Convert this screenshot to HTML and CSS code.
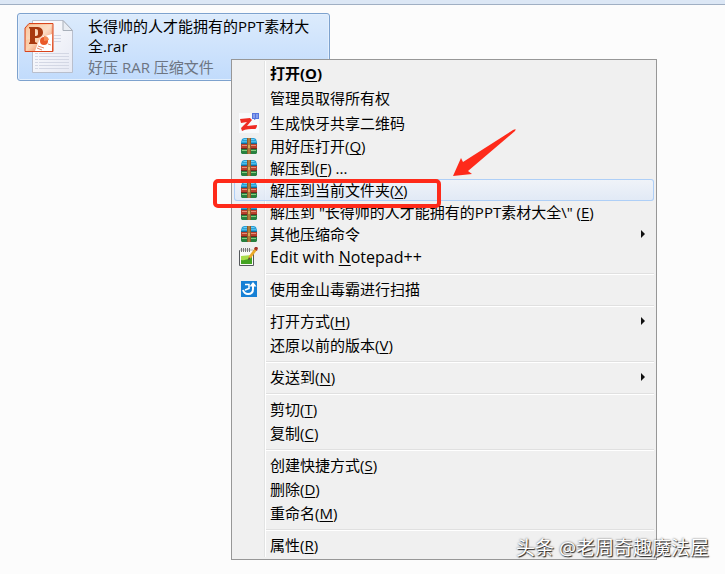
FILE: index.html
```
<!DOCTYPE html>
<html lang="zh-CN">
<head>
    <meta charset="UTF-8">
    <meta name="viewport" content="width=device-width, initial-scale=1.0">
    <title>长得帅的人才能拥有的PPT素材大全.rar</title>
    <link rel="stylesheet" href="styles.css">
</head>
<body>
    <!-- Iconos compartidos -->
    <svg class="sprites" aria-hidden="true">
        <symbol id="haozip" viewBox="0 0 16 16">
            <path d="M3 0h10l2 1 1 3v2H0V4l1-3z" fill="#2a9fd6"/>
            <path d="M3 1h10l1 1H2z" fill="#6fcff2"/>
            <path d="M1 3h14v1H1z" fill="#4dbdea"/>
            <path d="M0 5h16v1H0z" fill="#176a94"/>
            <path d="M0 6h16v4H0z" fill="#b8402c"/>
            <path d="M1 7h14v1H1z" fill="#e58f78"/>
            <path d="M0 10h16v1H0z" fill="#6e2a1c"/>
            <path d="M0 11h16v4l-1 1H1l-1-1z" fill="#27803f"/>
            <path d="M1 12h14v1H1z" fill="#86cc7c"/>
            <path d="M6 0h4v16H6z" fill="#8c5a2a"/>
            <path d="M7 0h2v16H7z" fill="#b07c3c"/>
            <path d="M7 7h2v3H7z" fill="#d9ab55"/>
        </symbol>
    </svg>

    <div class="toolbar"></div>

    <main class="files">
        <div class="file">
            <svg class="file-icon" viewBox="0 0 50 54" aria-hidden="true">
                <defs>
                    <linearGradient id="paper" x1="0" y1="0" x2="1" y2="1">
                        <stop offset="0" stop-color="#ffffff"/>
                        <stop offset="1" stop-color="#e6e9f4"/>
                    </linearGradient>
                    <linearGradient id="ppt" x1="0" y1="0" x2="1" y2="1">
                        <stop offset="0" stop-color="#f7b07a"/>
                        <stop offset="0.5" stop-color="#fbd3b3"/>
                        <stop offset="1" stop-color="#e8562a"/>
                    </linearGradient>
                </defs>
                <path d="M8.500 .5H39l9.500 10v42h-40z" fill="url(#paper)" stroke="#b9bfcd"/>
                <path d="M39 .5v10h9.500z" fill="#e9edf3" stroke="#a9b0ba"/>
                <path d="M30 15.500h7M30 18.500h7M30 21.500h7M11 33.500h3m1 0h30M11 36.500h3m1 0h30M11 39.500h3m1 0h30M11 42.500h3m1 0h30M11 45.500h3m1 0h30M11 48.500h3m1 0h30" stroke="#d3d7e4"/>
                <path d="M5 3.500h24v28H1V8z" fill="url(#ppt)" stroke="#d9441c"/>
                <path d="M6 5h21v9L2 20V9z" fill="#fff" opacity="0.25"/>
                <path d="M17 17l11-3v17H11l3-8z" fill="#fff"/>
                <circle cx="20" cy="21" r="4" fill="#ea5a29"/>
                <path d="M20 21v-5a5 5 0 0 1 5 4z" fill="#f58c55"/>
                <path d="M14 26l6 2m-7 0l5 2m6-6l3 1" stroke="#e88a6a"/>
                <path d="M5 7h7c5 0 7 2 7 5.500S16 18 12 18h-1v4l2 1v1H5v-1l1-1V9L5 8V7zM11 9v7c3 0 3-1 3-3.500S14 9 11 9z" fill="#a8390f" fill-rule="evenodd"/>
            </svg>
            <div class="file-info">
                <div class="file-name">长得帅的人才能拥有的PPT素材大全.rar</div>
                <div class="file-type">好压 RAR 压缩文件</div>
            </div>
        </div>
    </main>

    <div class="menu" role="menu">
        <button class="item bold" role="menuitem"><span class="icon"></span><span>打开(<u>O</u>)</span></button>
        <button class="item tall" role="menuitem"><span class="icon"></span><span>管理员取得所有权</span></button>
        <button class="item" role="menuitem">
            <span class="icon">
                <svg class="large" viewBox="0 0 20 20" aria-hidden="true">
                    <path d="M0 0h20v20H0z" fill="#f8fafc"/>
                    <path d="M1 6l10-1 2 2-5 6 10-1c0 2-1 4-2 4-5 0-9 0-13 2l-1-3 6-6-6 1z" fill="#ef2b24"/>
                    <path d="M13 0h7v6h-3l-2 1V6h-2z" fill="#5674de"/>
                    <path d="M14 2h2m1 0h2m-5 2h2m1 0h2" stroke="#b8c9fa"/>
                </svg>
            </span>
            <span>生成快牙共享二维码</span>
        </button>
        <button class="item compact" role="menuitem"><span class="icon"><svg><use href="#haozip"/></svg></span><span>用好压打开(<u>Q</u>)</span></button>
        <button class="item compact" role="menuitem"><span class="icon"><svg><use href="#haozip"/></svg></span><span>解压到(<u>F</u>) ...</span></button>
        <button class="item compact selected" role="menuitem">
            <span class="icon"><svg><use href="#haozip"/></svg></span>
            <span>解压到当前文件夹(<u>X</u>)</span>
            <span class="mark"></span>
            <svg class="pointer" viewBox="0 0 64 48" aria-hidden="true">
                <path d="M0 47L8 29l2 4L60 1q4-2 2 1L15 42l4 3z" fill="#fe2a1a"/>
            </svg>
        </button>
        <button class="item compact" role="menuitem"><span class="icon"><svg><use href="#haozip"/></svg></span><span>解压到 "长得帅的人才能拥有的PPT素材大全\" (<u>E</u>)</span></button>
        <button class="item compact submenu" role="menuitem" aria-haspopup="true"><span class="icon"><svg><use href="#haozip"/></svg></span><span>其他压缩命令</span></button>
        <button class="item latin" role="menuitem">
            <span class="icon">
                <svg class="large" viewBox="0 0 20 20" aria-hidden="true">
                    <path d="M.5 3.500h14v15H.5z" fill="#fbfbf8" stroke="#55585c"/>
                    <path d="M1 2h13v2H1z" fill="#d6d6d6"/>
                    <path d="M2.500 1v4m2-4v4m2-4v4m2-4v4m2-4v4" stroke="#777"/>
                    <path d="M2 9l11-1v9H2z" fill="#a8dc4a"/>
                    <path d="M2 13q6 1 11-3v7H2z" fill="#43a321"/>
                    <path d="M9 13l1-4 6-8 2 2-6 8z" fill="#e9a929"/>
                    <path d="M9 13l1-3 1 2z" fill="#333"/>
                    <path d="M15 2l1-2h2l1 1-1 3z" fill="#a8342a"/>
                </svg>
            </span>
            <span>Edit with <u>N</u>otepad++</span>
        </button>
        <div class="separator" role="separator"></div>
        <button class="item" role="menuitem">
            <span class="icon">
                <svg viewBox="0 0 16 16" aria-hidden="true">
                    <path d="M0 0h16v16H0z" fill="#1780d5"/>
                    <path d="M4 3.500h4v4L4 9" fill="none" stroke="#fff" stroke-width="1.500"/>
                    <path d="M2 9c1 3 3 4 5 4 3 0 5-2 5-5V4" fill="none" stroke="#fff" stroke-width="2"/>
                    <path d="M8.500 5.500L12 1l3.500 4.500z" fill="#fff"/>
                </svg>
            </span>
            <span>使用金山毒霸进行扫描</span>
        </button>
        <div class="separator" role="separator"></div>
        <button class="item submenu" role="menuitem" aria-haspopup="true"><span class="icon"></span><span>打开方式(<u>H</u>)</span></button>
        <button class="item" role="menuitem"><span class="icon"></span><span>还原以前的版本(<u>V</u>)</span></button>
        <div class="separator" role="separator"></div>
        <button class="item submenu" role="menuitem" aria-haspopup="true"><span class="icon"></span><span>发送到(<u>N</u>)</span></button>
        <div class="separator" role="separator"></div>
        <button class="item" role="menuitem"><span class="icon"></span><span>剪切(<u>T</u>)</span></button>
        <button class="item" role="menuitem"><span class="icon"></span><span>复制(<u>C</u>)</span></button>
        <div class="separator" role="separator"></div>
        <button class="item" role="menuitem"><span class="icon"></span><span>创建快捷方式(<u>S</u>)</span></button>
        <button class="item" role="menuitem"><span class="icon"></span><span>删除(<u>D</u>)</span></button>
        <button class="item" role="menuitem"><span class="icon"></span><span>重命名(<u>M</u>)</span></button>
        <div class="separator" role="separator"></div>
        <button class="item" role="menuitem"><span class="icon"></span><span>属性(<u>R</u>)</span></button>
    </div>

    <div class="watermark">头条 @老周奇趣魔法屋</div>
</body>
</html>
```
FILE: styles.css
```
* {
    box-sizing: border-box;
}
body {
    position: relative;
    margin: 0;
    min-height: 100vh;
    background-color: #fcfcfc;
    color: #000;
    font-family: "Open Sans", "Noto Sans CJK SC", sans-serif;
    font-size: 15px;
}
.sprites {
    position: absolute;
    width: 0;
    height: 0;
}
.toolbar {
    height: 5px;
    background-color: #dce7f5;
    border-bottom: 1px solid #a0afc3;
}
.files {
    padding: 8px 17px;
}
.file {
    display: flex;
    gap: 14px;
    width: 313px;
    padding: 2px 12px 2px 6px;
    border: 1px solid #7da2ce;
    border-radius: 3px;
    background: linear-gradient(#dcebfc, #c1dbfc);
    box-shadow: inset 0 0 0 1px #e3effd;
}
.file-icon {
    flex: none;
    width: 50px;
    height: 54px;
    margin-top: 4px;
}
.file-info {
    line-height: 20px;
}
.file-type {
    line-height: 22px;
    color: #6d7582;
}
.menu {
    position: absolute;
    top: 59px;
    left: 231px;
    min-width: 426px;
    padding: 1px 2px 2px;
    border: 1px solid #979797;
    background: linear-gradient(to right, transparent 30px, #e2e3e3 30px, #e2e3e3 31px, #fff 31px, #fff 32px, transparent 32px) content-box, #f0f0f0;
}
.item {
    position: relative;
    display: flex;
    align-items: center;
    width: 100%;
    height: 24px;
    padding: 0;
    border: 0;
    background: none;
    color: inherit;
    font: inherit;
    line-height: 20px;
    text-align: left;
    white-space: nowrap;
}
.item u {
    text-underline-offset: 2px;
    text-decoration-skip-ink: none;
}
.bold {
    font-weight: bold;
}
.latin {
    font-size: 16px;
}
.tall {
    height: 26px;
}
.compact {
    height: 22px;
}
.icon {
    display: flex;
    justify-content: center;
    width: 30px;
    margin-right: 6px;
}
.icon svg {
    width: 16px;
    height: 16px;
}
.icon .large {
    width: 20px;
    height: 20px;
}
.selected {
    z-index: 1;
    border-radius: 3px;
    background: linear-gradient(rgba(240, 245, 252, 0.7), rgba(218, 230, 248, 0.7));
    box-shadow: inset 0 0 0 1px #aecff7;
}
.submenu::after {
    content: "";
    margin-left: auto;
    margin-right: 9px;
    border: 4px solid transparent;
    border-left-color: #111;
    border-right: 0;
}
.separator {
    height: 8px;
    padding: 4px 0 0 32px;
}
.separator::before {
    content: "";
    display: block;
    border-top: 1px solid #e0e0e0;
    border-bottom: 1px solid #fff;
}
/* marca roja y flecha sobre la opción elegida */
.mark {
    position: absolute;
    top: 0;
    left: -21px;
    width: 228px;
    height: 29px;
    border: 4px solid #fe2a1a;
    border-radius: 5px;
}
.pointer {
    position: absolute;
    left: 219px;
    bottom: 24px;
    width: 64px;
    height: 48px;
}
.watermark {
    position: absolute;
    right: 16px;
    bottom: 12px;
    color: #fff;
    font-size: 19px;
    line-height: 28px;
    text-shadow: 1px 1px 1px #222, 0 0 2px #555;
}
```
